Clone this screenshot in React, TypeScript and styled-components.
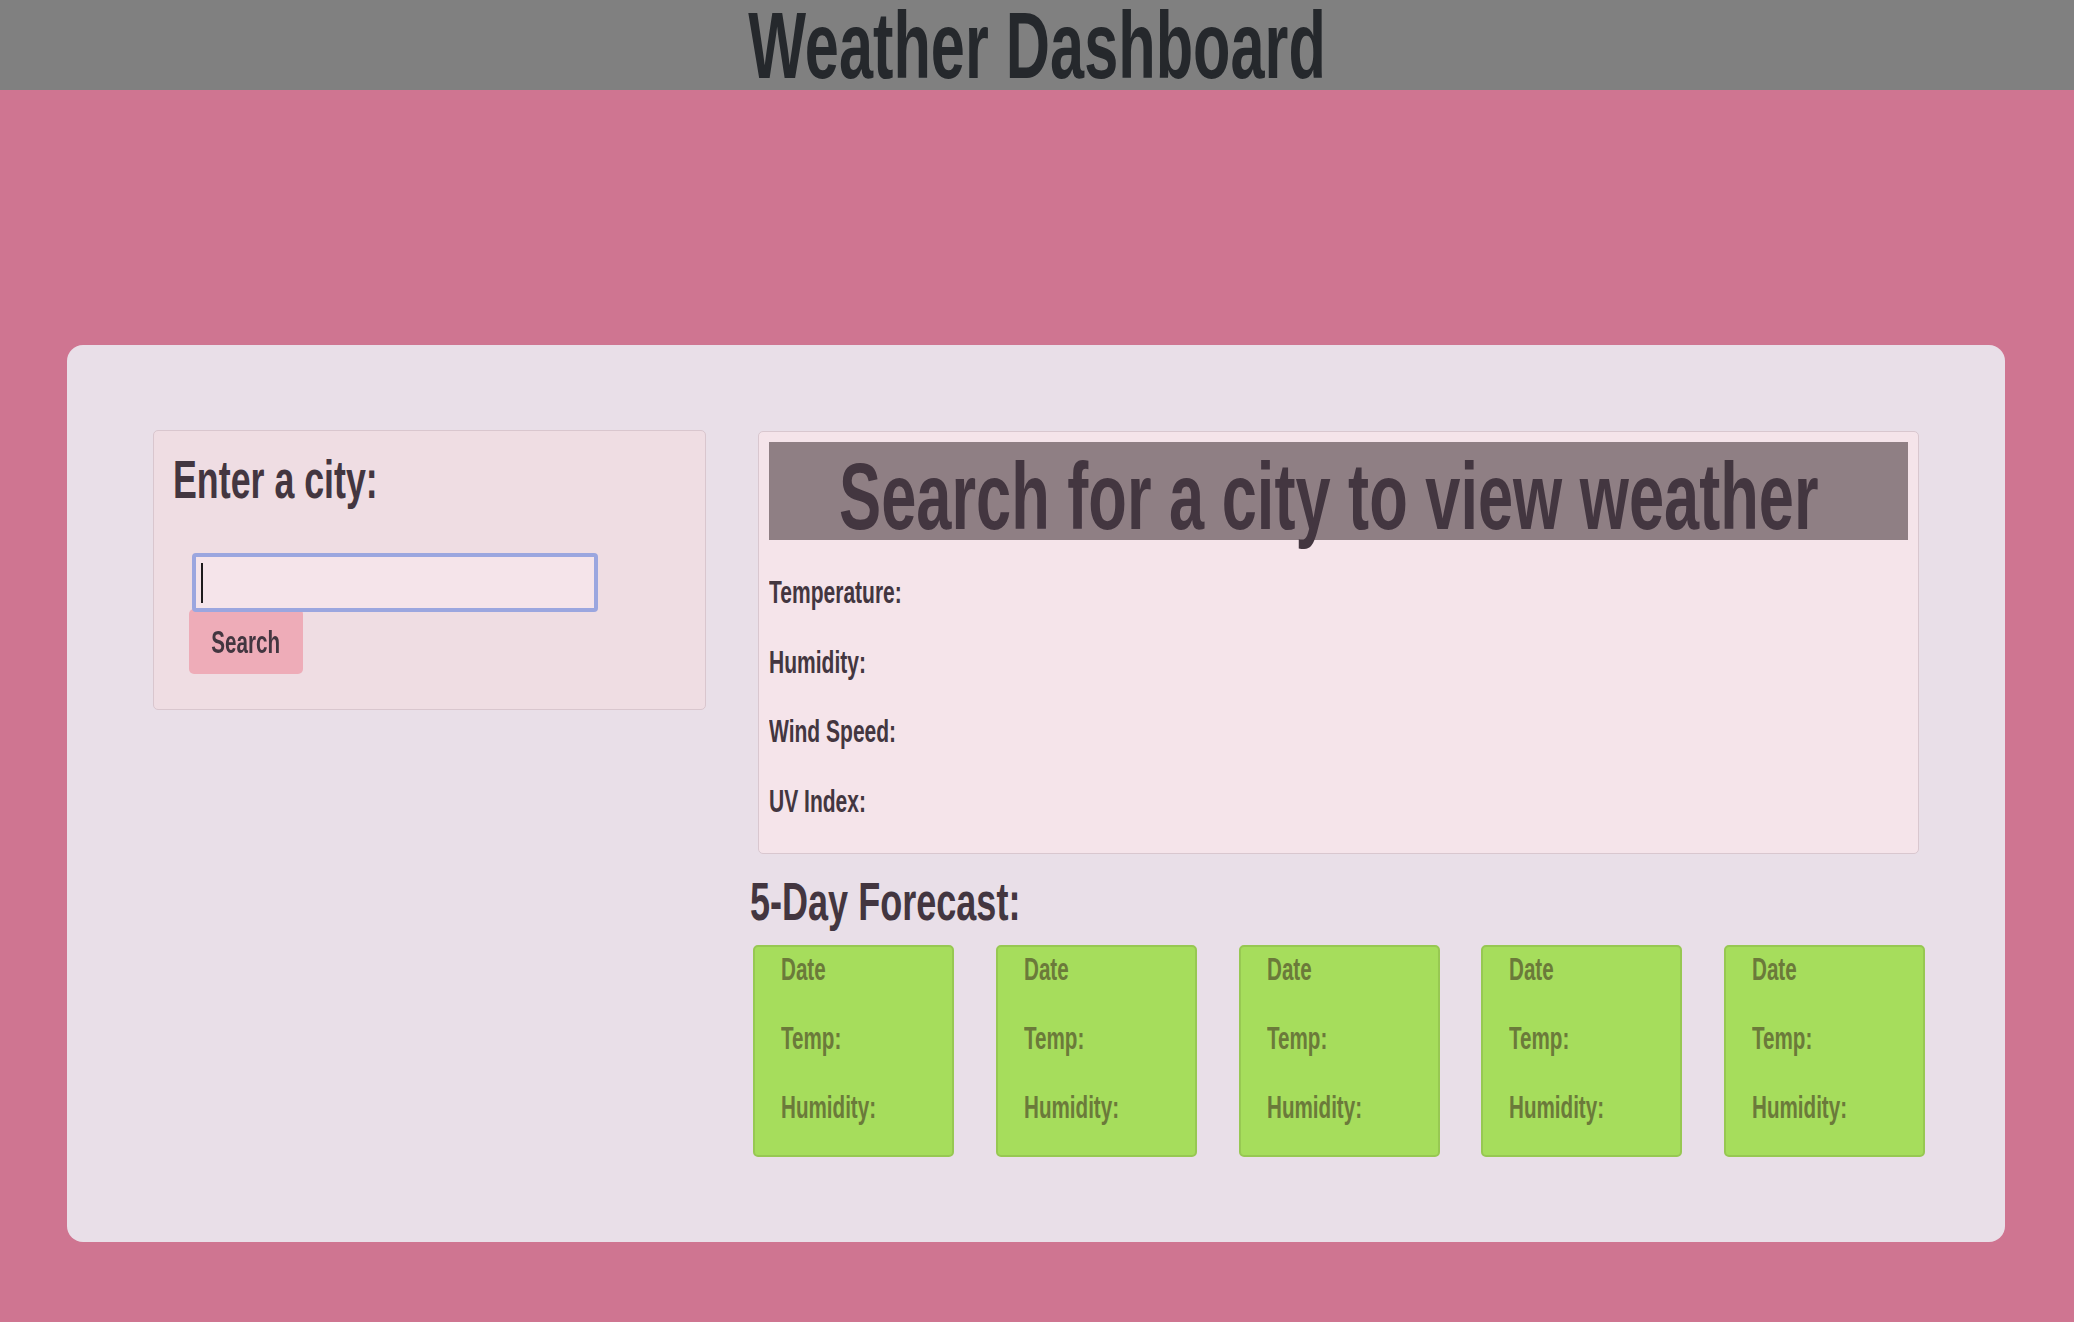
import styled, { createGlobalStyle, css } from 'styled-components';

// No narrow face is installed, so the tall, tight headline look is made by
// squeezing bold Liberation Sans horizontally.
const condensed = (origin = 'left', factor = 0.665) => css`
  transform: scaleX(${factor});
  transform-origin: ${origin} center;
`;

const GlobalStyle = createGlobalStyle`
  * {
    box-sizing: border-box;
  }

  html,
  body {
    margin: 0;
    padding: 0;
  }

  body {
    min-height: 1322px;
    background-color: #cf7591;
    font-family: 'Liberation Sans', Arial, sans-serif;
    font-weight: 700;
    color: #433640;
  }
`;

const Header = styled.header`
  height: 90px;
  background-color: #808080;
`;

const Title = styled.h1`
  margin: 0;
  text-align: center;
  white-space: nowrap;
  font-size: 95px;
  line-height: 91px;
  font-weight: 700;
  color: #25282c;
  ${condensed('center', 0.645)}
`;

const Main = styled.main`
  padding: 255px 69px 80px 67px;
`;

const Dashboard = styled.section`
  display: grid;
  grid-template-columns: 553px minmax(0, 1fr);
  column-gap: 44px;
  align-items: start;
  padding: 85px 80px 85px 86px;
  background-color: #e9dfe8;
  border-radius: 16px;
`;

const SearchPanel = styled.div`
  padding: 17px 19px 35px;
  background-color: #efdde3;
  border: 1px solid #d9c6ce;
  border-radius: 5px;
`;

const PanelHeading = styled.h2`
  margin: 0 0 41px;
  white-space: nowrap;
  font-size: 53px;
  line-height: 1.2;
  font-weight: 700;
  ${condensed('left', 0.675)}
`;

const SearchForm = styled.form`
  display: flex;
  flex-direction: column;
  align-items: flex-start;
  padding-left: 16px;
`;

const InputWrap = styled.div`
  position: relative;
  margin-left: 3px;

  /* the text caret of the focused field */
  &::after {
    content: '';
    position: absolute;
    left: 9px;
    top: 10px;
    width: 2px;
    height: 40px;
    background-color: #1d1a1c;
    pointer-events: none;
  }
`;

const CityInput = styled.input`
  display: block;
  width: 406px;
  height: 59px;
  padding: 0 5px;
  background-color: #f5e4ea;
  border: 4px solid #9ba6df;
  border-radius: 4px;
  outline: none;
  font-family: inherit;
  font-size: 30px;
  color: #433640;
  caret-color: transparent;
`;

const SearchButton = styled.button`
  display: flex;
  align-items: center;
  justify-content: center;
  width: 114px;
  height: 65px;
  margin-top: -3px;
  padding: 4px 0 0;
  background-color: #eeacb8;
  border: none;
  border-radius: 5px;
  font-family: inherit;
  font-size: 31px;
  font-weight: 700;
  color: #433640;
  cursor: pointer;
`;

const ButtonLabel = styled.span`
  display: inline-block;
  white-space: nowrap;
  ${condensed('center')}
`;

const ResultsColumn = styled.div`
  display: flex;
  flex-direction: column;
  min-width: 0;
`;

const CurrentPanel = styled.div`
  margin: 1px 6px 0 8px;
  padding: 10px 10px 6px;
  background-color: #f5e4ea;
  border: 1px solid #d9c7cf;
  border-radius: 5px;
`;

const TitleBar = styled.div`
  display: flex;
  justify-content: center;
  height: 98px;
  padding: 11px 19px 0 0;
  background-color: #8f7f84;
`;

const CityTitle = styled.h2`
  flex-shrink: 0;
  margin: 0;
  white-space: nowrap;
  font-size: 94px;
  line-height: 87px;
  font-weight: 700;
  ${condensed('center', 0.672)}
`;

const StatList = styled.div`
  margin-top: 29px;
`;

const Stat = styled.p`
  margin: 0 0 23px;
  white-space: nowrap;
  font-size: 32px;
  line-height: 46.5px;
  ${condensed('left', 0.657)}
`;

const ForecastHeading = styled.h3`
  margin: 16px 0 11px;
  white-space: nowrap;
  font-size: 53px;
  line-height: 1.2;
  font-weight: 700;
  ${condensed('left', 0.68)}
`;

const ForecastRow = styled.div`
  display: flex;
  justify-content: space-between;
  padding-left: 3px;
`;

const ForecastCard = styled.div`
  width: 201px;
  height: 212px;
  padding-left: 26px;
  background-color: #a6dd5c;
  border: 2px solid #97c852;
  border-radius: 5px;
  color: #6b7a3a;
`;

const ForecastLine = styled.p`
  margin: 0 0 24px;
  white-space: nowrap;
  font-size: 31px;
  line-height: 45px;
  ${condensed()}
`;

const currentStats = ['Temperature:', 'Humidity:', 'Wind Speed:', 'UV Index:'];
const forecastDays = [1, 2, 3, 4, 5];

export default function App() {
  return (
    <>
      <GlobalStyle />
      <Header>
        <Title>Weather Dashboard</Title>
      </Header>
      <Main>
        <Dashboard>
          <SearchPanel>
            <PanelHeading>Enter a city:</PanelHeading>
            <SearchForm onSubmit={(e) => e.preventDefault()}>
              <InputWrap>
                <CityInput type="text" autoFocus />
              </InputWrap>
              <SearchButton type="submit">
                <ButtonLabel>Search</ButtonLabel>
              </SearchButton>
            </SearchForm>
          </SearchPanel>
          <ResultsColumn>
            <CurrentPanel>
              <TitleBar>
                <CityTitle>Search for a city to view weather</CityTitle>
              </TitleBar>
              <StatList>
                {currentStats.map((label) => (
                  <Stat key={label}>{label}</Stat>
                ))}
              </StatList>
            </CurrentPanel>
            <ForecastHeading>5-Day Forecast:</ForecastHeading>
            <ForecastRow>
              {forecastDays.map((day) => (
                <ForecastCard key={day}>
                  <ForecastLine>Date</ForecastLine>
                  <ForecastLine>Temp:</ForecastLine>
                  <ForecastLine>Humidity:</ForecastLine>
                </ForecastCard>
              ))}
            </ForecastRow>
          </ResultsColumn>
        </Dashboard>
      </Main>
    </>
  );
}
